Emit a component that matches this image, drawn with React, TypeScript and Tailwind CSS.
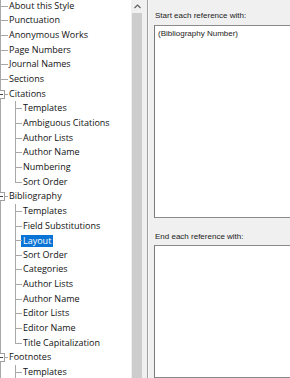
import React from "react";

type Row = { label: string; level: 0 | 1; kind?: "parent" | "last"; selected?: boolean };

const rows: Row[] = [
  { label: "About this Style", level: 0 },
  { label: "Punctuation", level: 0 },
  { label: "Anonymous Works", level: 0 },
  { label: "Page Numbers", level: 0 },
  { label: "Journal Names", level: 0 },
  { label: "Sections", level: 0 },
  { label: "Citations", level: 0, kind: "parent" },
  { label: "Templates", level: 1 },
  { label: "Ambiguous Citations", level: 1 },
  { label: "Author Lists", level: 1 },
  { label: "Author Name", level: 1 },
  { label: "Numbering", level: 1 },
  { label: "Sort Order", level: 1, kind: "last" },
  { label: "Bibliography", level: 0, kind: "parent" },
  { label: "Templates", level: 1 },
  { label: "Field Substitutions", level: 1 },
  { label: "Layout", level: 1, selected: true },
  { label: "Sort Order", level: 1 },
  { label: "Categories", level: 1 },
  { label: "Author Lists", level: 1 },
  { label: "Author Name", level: 1 },
  { label: "Editor Lists", level: 1 },
  { label: "Editor Name", level: 1 },
  { label: "Title Capitalization", level: 1, kind: "last" },
  { label: "Footnotes", level: 0, kind: "parent" },
  { label: "Templates", level: 1 },
];

function TreeRow({ row }: { row: Row }) {
  return (
    <div className="relative flex h-[14.67px] items-center">
      <div className="absolute left-0 top-0 h-full w-px bg-[#a8a8a8]" />
      {row.level === 0 ? (
        <>
          <div className="absolute left-0 top-[7px] h-px w-[8px] bg-[#a8a8a8]" />
          {row.kind === "parent" && (
            <div className="absolute left-[-4px] top-[3px] flex h-[9px] w-[9px] items-center justify-center border border-[#a0a0a0] bg-white">
              <div className="h-px w-[5px] bg-[#444]" />
            </div>
          )}
          <span className="pl-[9px] text-[#111]">{row.label}</span>
        </>
      ) : (
        <>
          <div
            className={
              row.kind === "last"
                ? "absolute left-[15px] top-0 h-[7.5px] w-px bg-[#a8a8a8]"
                : "absolute left-[15px] top-0 h-full w-px bg-[#a8a8a8]"
            }
          />
          <div className="absolute left-[15px] top-[7px] h-px w-[7px] bg-[#a8a8a8]" />
          <span
            className={
              row.selected
                ? "ml-[21px] bg-[#0a74d6] px-[2px] leading-[12px] text-white"
                : "pl-[23px] text-[#111]"
            }
          >
            {row.label}
          </span>
        </>
      )}
    </div>
  );
}

export default function App() {
  return (
    <div
      className="flex h-[378px] w-[290px] overflow-hidden bg-[#f0f0f0]"
      style={{ fontFamily: "'Open Sans', 'Noto Sans', sans-serif" }}
    >
      <div className="w-[131px] shrink-0 overflow-hidden bg-white text-[9px] font-medium leading-[14.67px]">
        <div className="mt-[-1.33px]">
          {rows.map((r, i) => (
            <TreeRow key={i} row={r} />
          ))}
        </div>
      </div>
      <div className="flex w-[12px] shrink-0 flex-col bg-[#f0f0f0]">
        <div className="flex h-[13px] items-center justify-center">
          <svg width="7" height="5" viewBox="0 0 7 5">
            <path d="M0.5 4 L3.5 1 L6.5 4" fill="none" stroke="#606060" strokeWidth="1.2" />
          </svg>
        </div>
        <div className="mx-[1px] flex-1 bg-[#cdcdcd]" />
      </div>
      <div className="w-[4px] shrink-0 bg-[#f0f0f0]" />
      <div className="w-px shrink-0 bg-[#a0a0a0]" />
      <div className="w-px shrink-0 bg-[#fafafa]" />
      <div
        className="flex min-w-0 flex-1 flex-col pl-[5px] text-[8px] text-[#222]"
        style={{ fontFamily: "'Liberation Sans', Arial, sans-serif" }}
      >
        <div className="mt-[11px] h-[10px] pl-px leading-[10px]">Start each reference with:</div>
        <div className="mt-[4px] h-[193px] w-[200px] shrink-0 border border-[#8a8a8a] border-l-[#7a7a7a] bg-white px-[3px] pt-[3px] leading-[10px]">
          (Bibliography Number)
        </div>
        <div className="mt-[14px] h-[10px] pl-px leading-[10px]">End each reference with:</div>
        <div className="mt-[3px] w-[200px] flex-1 border border-[#8a8a8a] border-l-[#7a7a7a] bg-white" />
      </div>
    </div>
  );
}
